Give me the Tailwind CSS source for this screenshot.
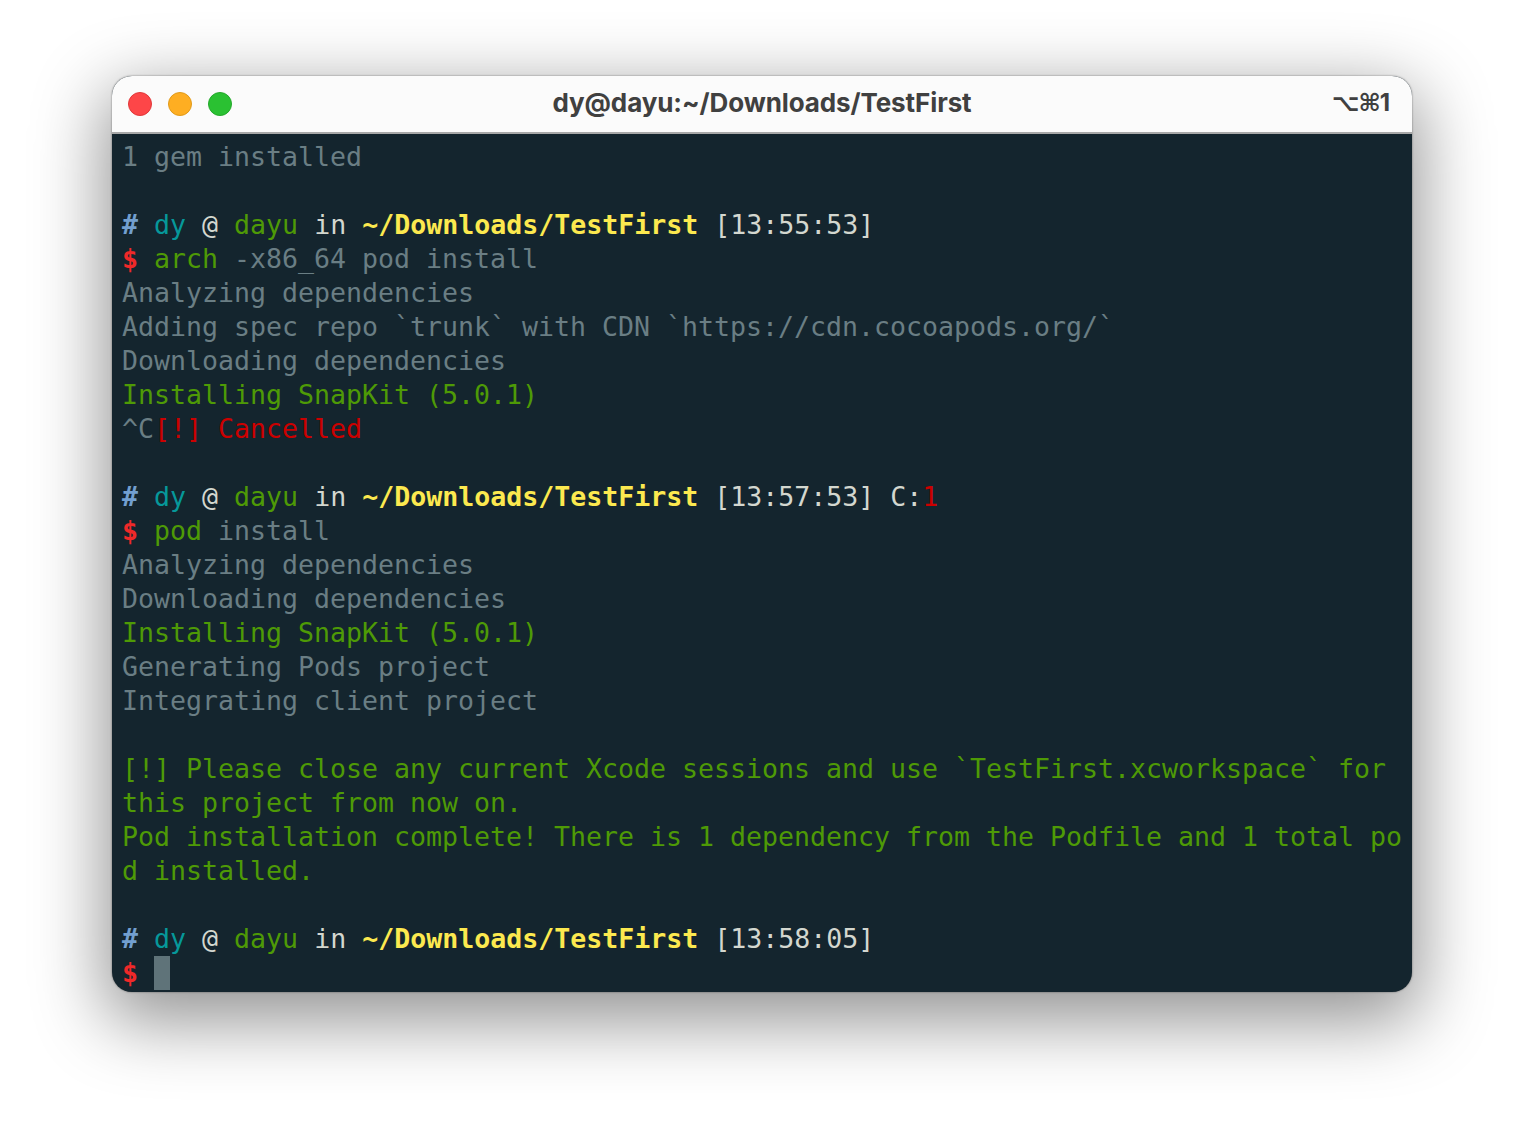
<!doctype html>
<html lang="en">
  <head>
    <meta charset="UTF-8" />
    <title>Terminal</title>
    <script src="https://cdn.jsdelivr.net/npm/@tailwindcss/browser@4"></script>
  </head>
  <body class="bg-white h-screen overflow-hidden">
    <div class="pt-[76px] pl-[112px]">
      <!-- Window -->
      <div class="w-[1300px] h-[916px] rounded-[20px] overflow-hidden flex flex-col bg-[#14252e] shadow-[0_22px_70px_8px_rgba(0,0,0,0.42),0_0_2px_rgba(0,0,0,0.5)]">
        <!-- Title bar -->
        <div class="h-[58px] shrink-0 bg-[#fbfbfb] border-b-2 border-[#a8a8a8] flex items-center pl-4 pr-[22px]">
          <div class="flex gap-4 w-[104px]">
            <div class="w-6 h-6 rounded-full bg-[#fd4648] border border-[#e0383a]"></div>
            <div class="w-6 h-6 rounded-full bg-[#feae22] border border-[#e09a1a]"></div>
            <div class="w-6 h-6 rounded-full bg-[#2ac132] border border-[#24a82b]"></div>
          </div>
          <div class="flex-1 text-center text-[26px] font-bold text-[#404040] font-['Inter',sans-serif] pl-[6px] pb-[3px] tracking-[-0.1px]">dy@dayu:~/Downloads/TestFirst</div>
          <div class="w-[104px] text-right text-[24px] font-bold text-[#404040] font-['Inter',sans-serif] pb-[3px]"><span class="font-['DejaVu_Sans',sans-serif] tracking-[-1px]">⌥⌘</span>1</div>
        </div>
        <!-- Terminal output -->
        <div class="pt-[6px] pl-[10px] font-['DejaVu_Sans_Mono',monospace] text-[26.58px] leading-[34px] text-[#6a7e84] [&>div]:whitespace-pre [&>div]:h-[34px]">
          <div>1 gem installed</div>
          <div> </div>
          <div><b class="text-[#729fcf]">#</b> <span class="text-[#06989a]">dy</span> <span class="text-[#d3d7cf]">@</span> <span class="text-[#4e9a06]">dayu</span> <span class="text-[#d3d7cf]">in</span> <b class="text-[#fce94f]">~/Downloads/TestFirst</b> <span class="text-[#d3d7cf]">[13:55:53]</span></div>
          <div><b class="text-[#ef2929]">$</b> <span class="text-[#4e9a06]">arch</span> -x86_64 pod install</div>
          <div>Analyzing dependencies</div>
          <div>Adding spec repo `trunk` with CDN `https://cdn.cocoapods.org/`</div>
          <div>Downloading dependencies</div>
          <div class="text-[#4e9a06]">Installing SnapKit (5.0.1)</div>
          <div>^C<span class="text-[#cc0000]">[!] Cancelled</span></div>
          <div> </div>
          <div><b class="text-[#729fcf]">#</b> <span class="text-[#06989a]">dy</span> <span class="text-[#d3d7cf]">@</span> <span class="text-[#4e9a06]">dayu</span> <span class="text-[#d3d7cf]">in</span> <b class="text-[#fce94f]">~/Downloads/TestFirst</b> <span class="text-[#d3d7cf]">[13:57:53] C:</span><span class="text-[#cc0000]">1</span></div>
          <div><b class="text-[#ef2929]">$</b> <span class="text-[#4e9a06]">pod</span> install</div>
          <div>Analyzing dependencies</div>
          <div>Downloading dependencies</div>
          <div class="text-[#4e9a06]">Installing SnapKit (5.0.1)</div>
          <div>Generating Pods project</div>
          <div>Integrating client project</div>
          <div> </div>
          <div class="text-[#4e9a06]">[!] Please close any current Xcode sessions and use `TestFirst.xcworkspace` for</div>
          <div class="text-[#4e9a06]">this project from now on.</div>
          <div class="text-[#4e9a06]">Pod installation complete! There is 1 dependency from the Podfile and 1 total po</div>
          <div class="text-[#4e9a06]">d installed.</div>
          <div> </div>
          <div><b class="text-[#729fcf]">#</b> <span class="text-[#06989a]">dy</span> <span class="text-[#d3d7cf]">@</span> <span class="text-[#4e9a06]">dayu</span> <span class="text-[#d3d7cf]">in</span> <b class="text-[#fce94f]">~/Downloads/TestFirst</b> <span class="text-[#d3d7cf]">[13:58:05]</span></div>
          <div class="flex"><b class="text-[#ef2929]">$</b><span> </span><span class="w-4 h-[34px] bg-[#5f7379]"></span></div>
        </div>
      </div>
    </div>
  </body>
</html>
